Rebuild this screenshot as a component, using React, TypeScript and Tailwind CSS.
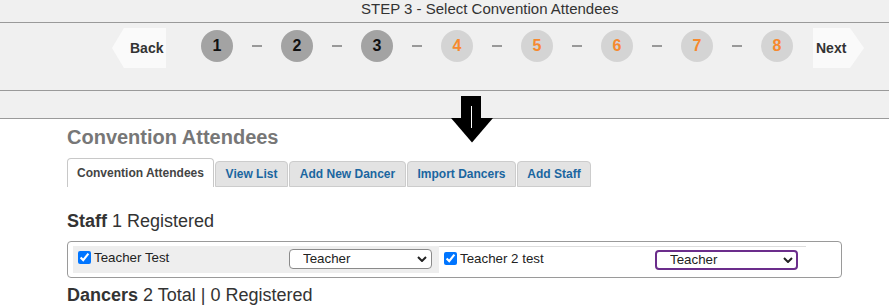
import React from "react";

const steps = [1, 2, 3, 4, 5, 6, 7, 8];

function Chevron() {
  return (
    <svg
      className="pointer-events-none absolute right-[5px] top-1/2 -translate-y-1/2"
      width="10"
      height="6"
      viewBox="0 0 10 6"
    >
      <path d="M1 1 L5 5 L9 1" fill="none" stroke="#222" strokeWidth="2" />
    </svg>
  );
}

function StaffCell({ name, focused, shaded }: { name: string; focused?: boolean; shaded?: boolean }) {
  return (
    <div
      className={
        shaded
          ? "flex h-[27px] w-[366px] items-start bg-[#eeeeee] pl-[5px]"
          : "flex h-[27px] w-[367px] items-start border-t border-[#dddddd] pl-[5px]"
      }
    >
      <div className="flex w-[211px] items-start">
        <input type="checkbox" defaultChecked className="mt-[5px] h-[13px] w-[13px]" />
        <span className="ml-[3px] mt-[4px] text-[13.33px] leading-[15px] text-[#222]">{name}</span>
      </div>
      <div className="relative mt-[3px] flex">
        <select
          defaultValue="Teacher"
          className={
            focused
              ? "block h-[20px] w-[143px] appearance-none rounded-[4px] border-2 border-[#6b2d8b] bg-white py-0 pl-[13px] text-[13.33px] leading-[16px] text-[#222] outline-none"
              : "block h-[20px] w-[143px] appearance-none rounded-[4px] border border-[#8a8a8a] bg-white py-0 pl-[13px] text-[13.33px] leading-[16px] text-[#222] outline-none"
          }
        >
          <option>Teacher</option>
          <option>Assistant</option>
        </select>
        <Chevron />
      </div>
    </div>
  );
}

const tabs: [string, string][] = [
  ["View List", "w-[73px]"],
  ["Add New Dancer", "w-[117px]"],
  ["Import Dancers", "w-[109px]"],
  ["Add Staff", "w-[74px]"],
];

export default function App() {
  return (
    <div className="relative w-[889px] h-[306px] overflow-hidden bg-white font-['Liberation_Sans',Arial,sans-serif]">
      <div className="bg-[#f0f0f0]">
        <div className="h-[23px] border-b border-[#9a9a9a] pl-[361px] text-[15px] leading-[17px] text-[#333]">
          STEP 3 - Select Convention Attendees
        </div>
        <div className="flex h-[68px] items-start border-b border-[#9a9a9a] pl-[112px] pt-[5px]">
          <div className="flex h-[40px] w-[54px] items-center bg-[#fafafa] pl-[18px] text-[14px] font-bold text-[#333] [clip-path:polygon(12px_0,100%_0,100%_100%,12px_100%,0_50%)]">
            Back
          </div>
          <div className="ml-[35px] mt-[2px] flex items-center">
            {steps.map((n, i) => (
              <React.Fragment key={n}>
                {i > 0 && <div className="mx-[19px] h-[2px] w-[10px] bg-[#999]" />}
                <div
                  className={
                    n <= 3
                      ? "flex h-[32px] w-[32px] items-center justify-center rounded-full bg-[#a3a3a3] text-[16px] font-bold text-[#111]"
                      : "flex h-[32px] w-[32px] items-center justify-center rounded-full bg-[#d4d4d4] text-[16px] font-bold text-[#f7892e]"
                  }
                >
                  {n}
                </div>
              </React.Fragment>
            ))}
          </div>
          <div className="ml-[20px] flex h-[40px] w-[51px] items-center bg-[#fafafa] pl-[3px] text-[14px] font-bold text-[#333] [clip-path:polygon(0_0,calc(100%-14px)_0,100%_50%,calc(100%-14px)_100%,0_100%)]">
            Next
          </div>
        </div>
        <div className="h-[28px] border-b border-[#9a9a9a]" />
      </div>

      <svg className="absolute left-[451px] top-[96px]" width="42" height="47" viewBox="0 0 42 47">
        <rect x="10" y="0" width="20" height="22.5" fill="#000" />
        <polygon points="0,22 42,22 21,46.5" fill="#000" />
        <rect x="20" y="10" width="1" height="22" fill="#fff" />
      </svg>

      <div className="pl-[67px]">
        <h1 className="mt-[7px] text-[20px] font-bold leading-[23px] text-[#777]">Convention Attendees</h1>
        <div className="mt-[9px] flex h-[29px] items-end gap-[1px] whitespace-nowrap text-[12px] font-bold leading-[14px]">
          <div className="h-[29px] w-[147px] rounded-t-[4px] border border-b-0 border-[#c8c8c8] bg-white pt-[7px] text-center text-[#444]">
            Convention Attendees
          </div>
          {tabs.map(([t, w]) => (
            <div
              key={t}
              className={`h-[26px] ${w} rounded-t-[4px] border border-[#cccccc] bg-[#e3e3e3] pt-[5px] text-center text-[#1a66a0]`}
            >
              {t}
            </div>
          ))}
        </div>

        <div className="mt-[24px] text-[18px] leading-[21px] text-[#333]">
          <span className="font-bold">Staff</span> 1 Registered
        </div>

        <div className="mt-[9px] w-[775px] rounded-[4px] border border-[#9a9a9a] pb-[4px] pl-[5px] pt-[4px]">
          <div className="flex">
            <StaffCell name="Teacher Test" shaded />
            <StaffCell name="Teacher 2 test" focused />
          </div>
        </div>

        <div className="mt-[7px] text-[18px] leading-[21px] text-[#333]">
          <span className="font-bold">Dancers</span> 2 Total | 0 Registered
        </div>
      </div>
    </div>
  );
}
